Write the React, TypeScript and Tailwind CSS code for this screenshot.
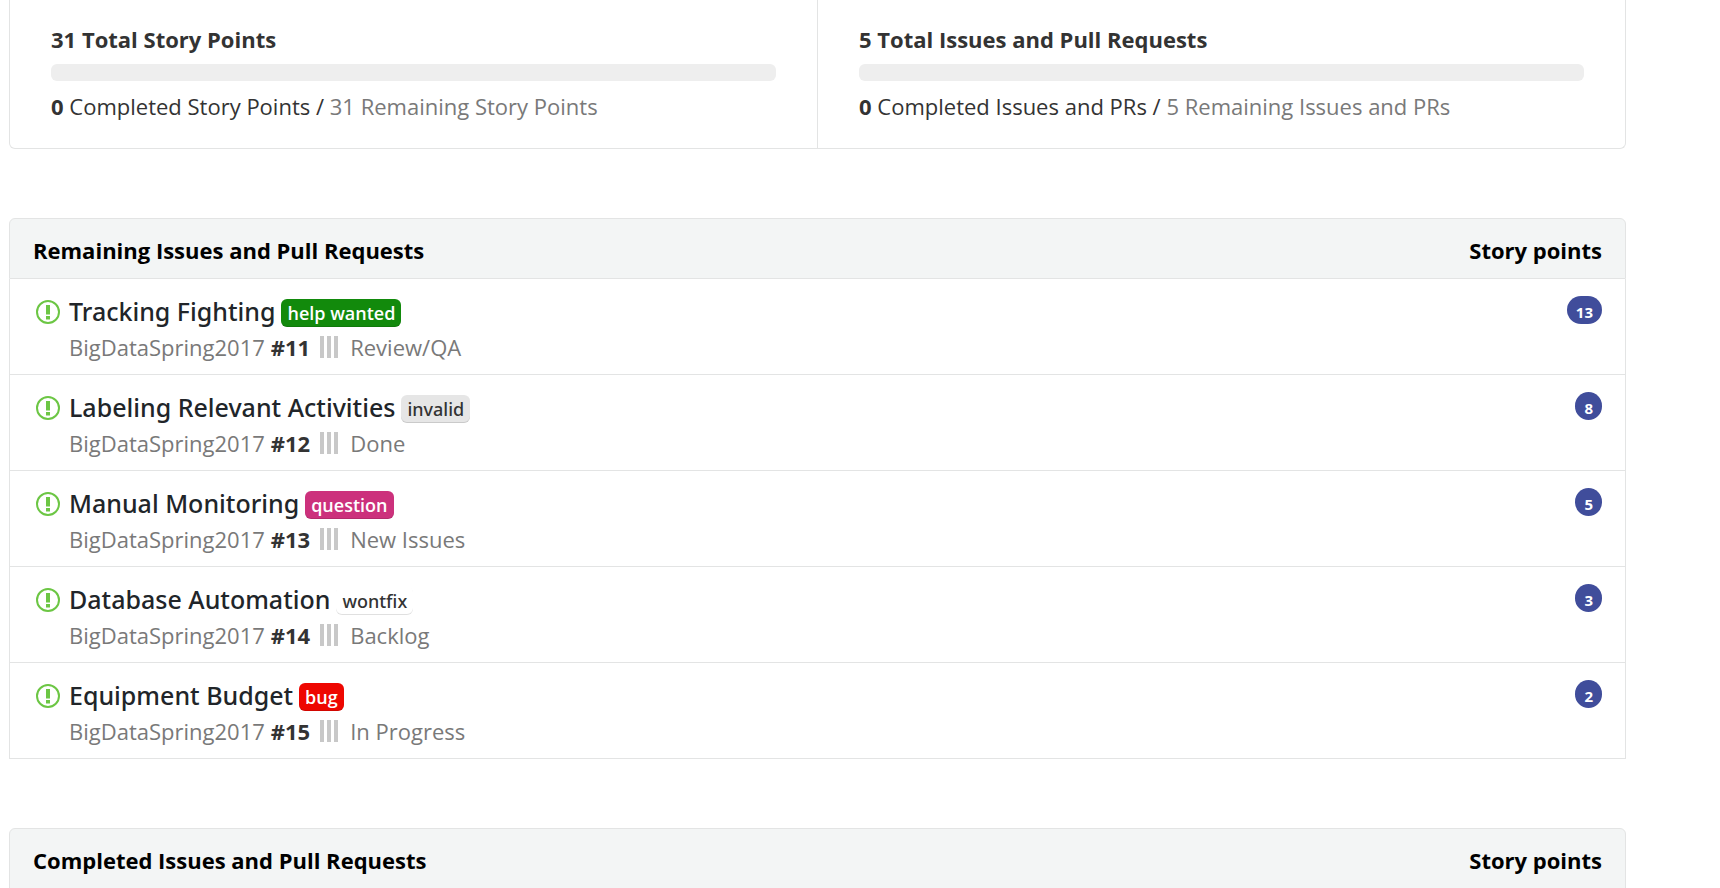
type Issue = {
  title: string;
  number: number;
  label: string;
  labelClass: string;
  pipeline: string;
  points: number;
};

const issues: Issue[] = [
  { title: 'Tracking Fighting', number: 11, label: 'help wanted', labelClass: 'bg-[#128a0c] text-white font-semibold', pipeline: 'Review/QA', points: 13 },
  { title: 'Labeling Relevant Activities', number: 12, label: 'invalid', labelClass: "bg-[#e6e6e6] text-[#333333] font-['Noto_Sans',sans-serif] font-medium", pipeline: 'Done', points: 8 },
  { title: 'Manual Monitoring', number: 13, label: 'question', labelClass: 'bg-[#cc317c] text-white font-semibold', pipeline: 'New Issues', points: 5 },
  { title: 'Database Automation', number: 14, label: 'wontfix', labelClass: "bg-white text-[#333333] font-['Noto_Sans',sans-serif] font-medium", pipeline: 'Backlog', points: 3 },
  { title: 'Equipment Budget', number: 15, label: 'bug', labelClass: 'bg-[#ee0701] text-white font-semibold', pipeline: 'In Progress', points: 2 },
];

function OpenIssueIcon() {
  return (
    <svg className="mt-[21px] h-6 w-6 shrink-0" viewBox="0 0 24 24" fill="none" aria-hidden="true">
      <circle cx="12" cy="12" r="11" stroke="#6cc644" strokeWidth="2" />
      <path d="M10 5h4v9.5h-4zM10 16h4v3.5h-4z" fill="#6cc644" />
    </svg>
  );
}

function PipelineIcon() {
  return (
    <svg className="mr-[11px] ml-[9px] h-[22px] w-[20px]" viewBox="0 0 20 22" aria-hidden="true">
      <path d="M1 0h4v22H1zM8 0h4v22H8zM15 0h4v22h-4z" fill="#c8c8c8" />
    </svg>
  );
}

function Summary({ total, unit, short }: { total: number; unit: string; short: string }) {
  return (
    <div className="flex-1 px-[41px] pt-[23px] pb-[26px] text-[22px] leading-8 text-[#333333]">
      <h2 className="font-bold">
        {total} Total {unit}
      </h2>
      <div
        role="progressbar"
        aria-label={`Completed ${unit}`}
        aria-valuemin={0}
        aria-valuemax={total}
        aria-valuenow={0}
        className="my-[9px] h-[17px] rounded-md bg-[#eeeeee]"
      />
      <p>
        <strong className="font-bold">0</strong> Completed {short} /{' '}
        <span className="text-[#797979]">
          {total} Remaining {short}
        </span>
      </p>
    </div>
  );
}

function ListHeader({ title }: { title: string }) {
  return (
    <header className="flex h-[61px] items-center justify-between rounded-t-md border border-[#e3e4e4] bg-[#f3f5f5] px-[23px] pt-1 text-[22px] font-bold text-black">
      <h2>{title}</h2>
      <span>Story points</span>
    </header>
  );
}

function IssueRow({ issue }: { issue: Issue }) {
  return (
    <li className="flex h-24 border-x border-b border-[#e3e4e4] pr-[23px] pl-[26px]">
      <OpenIssueIcon />
      <div className="ml-[9px] flex-1 pt-4">
        <div className="flex items-center gap-[6px]">
          <a
            href={`#issue-${issue.number}`}
            className="font-['Noto_Sans',sans-serif] text-[25px] leading-8 font-medium text-[#212529]"
          >
            {issue.title}
          </a>
          <span className={`mt-[3px] h-7 rounded-md px-[6px] text-[18px] leading-7 shadow-[inset_0_-1px_0_rgba(0,0,0,0.12)] ${issue.labelClass}`}>
            {issue.label}
          </span>
        </div>
        <div className="mt-1 flex items-center text-[22px] leading-8 text-[#797979]">
          <span>BigDataSpring2017</span>
          <strong className="ml-[6px] font-bold text-[#333333]">#{issue.number}</strong>
          <PipelineIcon />
          <span>{issue.pipeline}</span>
        </div>
      </div>
      <span className="mt-[17px] h-7 rounded-full bg-[#404d9b] px-[9px] pt-[2px] text-[15px] leading-7 font-bold text-white">
        {issue.points}
      </span>
    </li>
  );
}

export default function App() {
  return (
    <main className="mr-[94px] ml-[9px] font-['Open_Sans',sans-serif]">
      <section className="flex divide-x divide-[#e3e4e4] rounded-b-md border border-t-0 border-[#e3e4e4]">
        <Summary total={31} unit="Story Points" short="Story Points" />
        <Summary total={5} unit="Issues and Pull Requests" short="Issues and PRs" />
      </section>
      <section className="mt-[69px]">
        <ListHeader title="Remaining Issues and Pull Requests" />
        <ul>
          {issues.map((issue) => (
            <IssueRow key={issue.number} issue={issue} />
          ))}
        </ul>
      </section>
      <section className="mt-[69px]">
        <ListHeader title="Completed Issues and Pull Requests" />
      </section>
    </main>
  );
}
